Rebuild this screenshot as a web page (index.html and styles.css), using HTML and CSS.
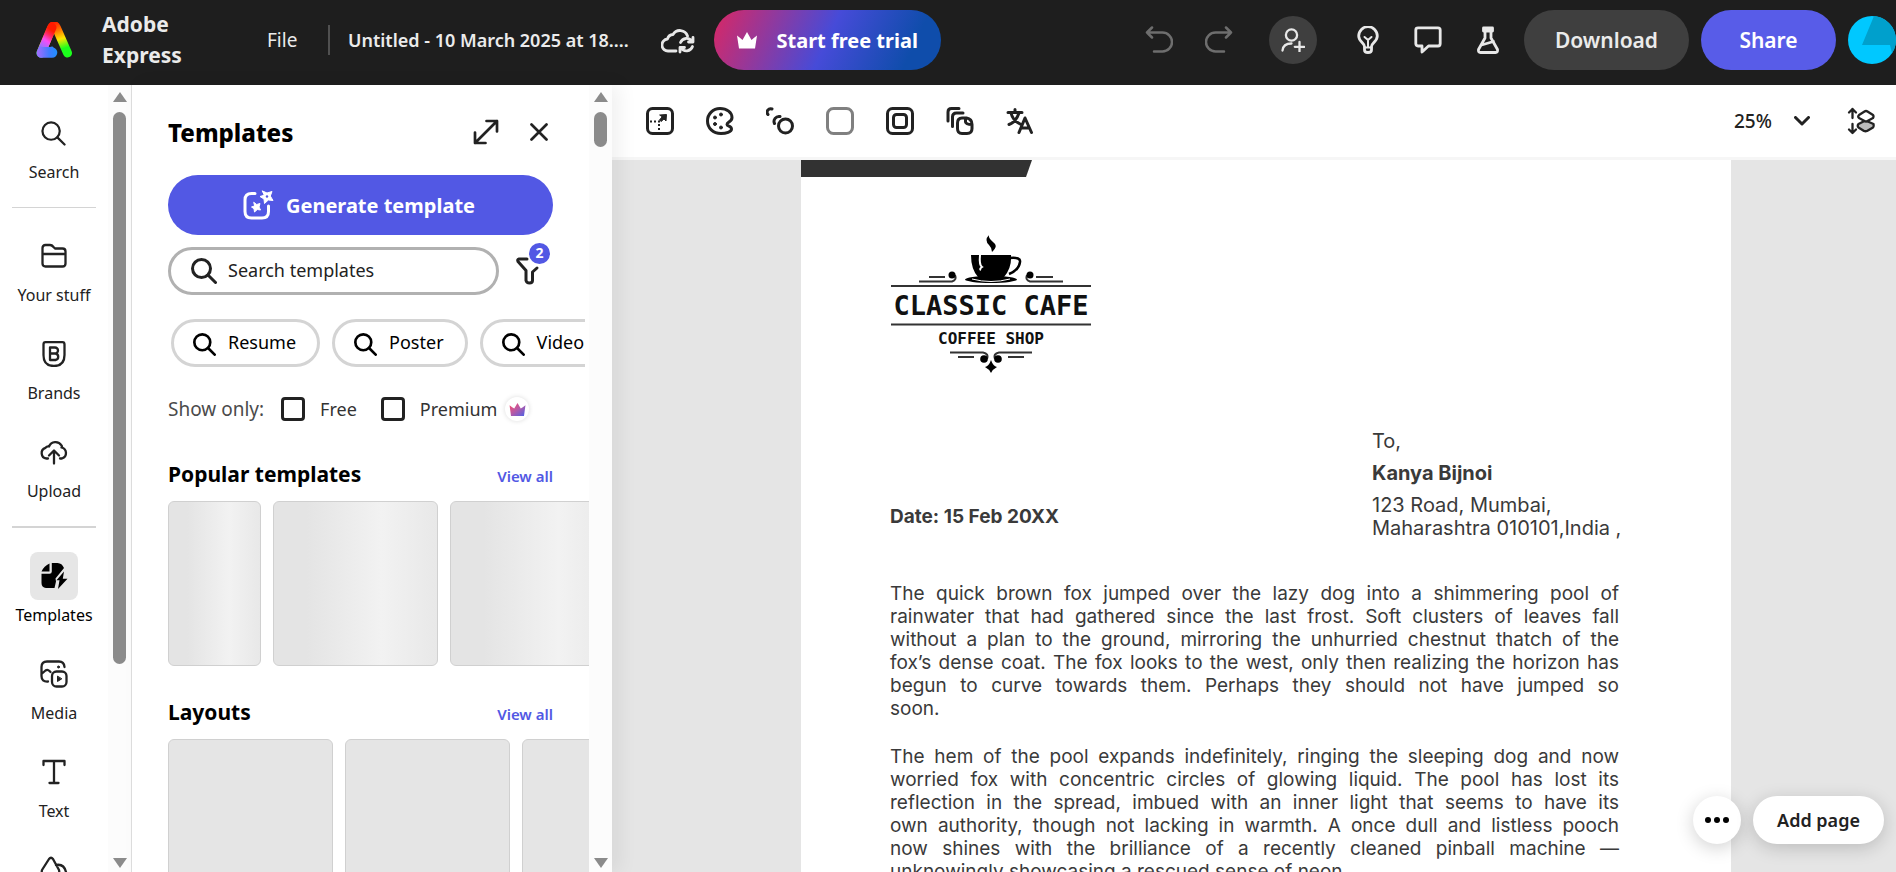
FILE: index.html
```html
<!DOCTYPE html>
<html lang="en">
<head>
<meta charset="utf-8">
<meta name="viewport" content="width=device-width, initial-scale=1">
<title>Adobe Express</title>
<link rel="stylesheet" href="styles.css">
</head>
<body>
<svg class="defs" aria-hidden="true">
  <defs>
    <symbol id="magnifier" viewBox="0 0 26 26"><circle cx="10.500" cy="10.500" r="9"/><path d="M17 17l7.500 7.500"/></symbol>
    <symbol id="crown" viewBox="0 0 22 18"><path d="M1 4.500q4 3 5.500 4.500L11 1l4.500 8q1.500-1.500 5.500-4.500L19 17.500H3z"/></symbol>
  </defs>
</svg>
<header class="topbar">
  <a class="brand" href="#">
    <svg class="brand-logo" viewBox="0 0 36 36" aria-hidden="true">
      <defs>
        <linearGradient id="lg-left" x1="0.600" y1="0" x2="0.300" y2="1"><stop offset="0" stop-color="#ff1a00"/><stop offset=".25" stop-color="#ff2a6a"/><stop offset=".5" stop-color="#f84cf5"/><stop offset=".8" stop-color="#a76bff"/><stop offset="1" stop-color="#5a78ff"/></linearGradient>
        <linearGradient id="lg-right" x1="0" y1="0" x2="0.300" y2="1"><stop offset="0" stop-color="#ff1500"/><stop offset=".35" stop-color="#ff7a00"/><stop offset=".65" stop-color="#ffe600"/><stop offset="1" stop-color="#1cff1c"/></linearGradient>
        <linearGradient id="lg-foot"><stop offset="0" stop-color="#a76bff"/><stop offset=".6" stop-color="#3f7cff"/><stop offset="1" stop-color="#1f8fff"/></linearGradient>
      </defs>
      <path d="M5 31L15.500 6Q18 1 20.500 6L31.500 31" fill="none" stroke="url(#lg-right)" stroke-width="9" stroke-linecap="round" stroke-linejoin="round"/>
      <path d="M5 31L16 5.500" fill="none" stroke="url(#lg-left)" stroke-width="9" stroke-linecap="round"/>
      <path d="M18 15L27 36H16L12 27z" fill="#1e1e1e"/>
      <path d="M1 30Q2 26 4 25H14Q17 24 17.500 25.500Q21.500 27 21.300 31Q20.500 35.500 16 35.800H5Q0.500 35 1 30z" fill="url(#lg-foot)"/>
    </svg>
    <span class="brand-name">Adobe<br>Express</span>
  </a>
  <button class="file-menu" type="button">File</button>
  <span class="topbar-rule"></span>
  <button class="doc-title" type="button">Untitled - 10 March 2025 at 18....</button>
  <button class="icon-btn cloud" type="button" aria-label="Saved to cloud">
    <svg width="34" height="28" viewBox="0 0 34 28" class="ico light"><path d="M15 25H7.500A6 6 0 0 1 6.500 13A6 6 0 0 1 12 8.500A8 8 0 0 1 26.500 10"/><path d="M19.500 16.500A6.500 6.500 0 0 1 31 15.500M32 11.500V16H27.500M31.500 20.500A6.500 6.500 0 0 1 20 22M19 26V21.500H23.500"/></svg>
  </button>
  <button class="trial" type="button"><svg width="22" height="18"><use href="#crown" fill="#fff"/></svg>Start free trial</button>
  <div class="history">
    <button class="icon-btn" type="button" aria-label="Undo"><svg width="28" height="28" viewBox="0 0 28 28" class="ico dim"><path d="M7 1.500L2 6.500L7 11.500M2 6.500H17.500A9.300 9.300 0 0 1 17.500 25.500H9"/></svg></button>
    <button class="icon-btn" type="button" aria-label="Redo"><svg width="28" height="28" viewBox="0 0 28 28" class="ico dim"><path d="M21 1.500L26 6.500L21 11.500M26 6.500H10.500A9.300 9.300 0 0 0 10.500 25.500H19"/></svg></button>
  </div>
  <button class="invite" type="button" aria-label="Invite people"><svg width="24" height="24" viewBox="0 0 24 24" class="ico light thin"><circle cx="10.500" cy="7" r="5.600"/><path d="M1.500 22.500C2 17.500 5.500 15.500 10.500 15.500M18.500 14V23.500M13.800 18.800H23.200"/></svg></button>
  <div class="helpers">
    <button class="icon-btn" type="button" aria-label="Tips"><svg width="28" height="28" viewBox="0 0 28 28" class="ico light"><path d="M10.500 20.500C10.500 17 4.700 15.500 4.700 10A9.300 9.300 0 0 1 23.300 10C23.300 15.500 17.500 17 17.500 20.500V24Q17.500 26.500 14 26.500Q10.500 26.500 10.500 24z"/><path stroke-width="2" d="M10.500 21.500H17.500M10.500 11L14 14L17.500 11M14 14V21"/></svg></button>
    <button class="icon-btn" type="button" aria-label="Comments"><svg width="28" height="28" viewBox="0 0 28 28" class="ico light"><path d="M4 1.800H24Q26.200 1.800 26.200 4V17.500Q26.200 20 24 20H14.500L8 26V20H4Q1.800 20 1.800 17.500V4Q1.800 1.800 4 1.800z"/></svg></button>
    <button class="icon-btn" type="button" aria-label="Labs"><svg width="28" height="28" viewBox="0 0 28 28" class="ico light"><path d="M9.500 2H18.500V5H9.500zM11 5V12L4.500 23.500Q4 26.500 6.500 26.500H21.500Q24 26.500 23.500 23.500L17 12V5M7.500 19L19.500 15.500"/></svg></button>
  </div>
  <button class="download" type="button">Download</button>
  <button class="share" type="button">Share</button>
  <button class="avatar" type="button" aria-label="Account"><svg width="48" height="48" viewBox="0 0 48 48"><circle cx="24" cy="24" r="24" fill="#00c8ff"/><path d="M26 0A24 24 0 0 1 44 37L42 29H14z" fill="#00a0cc"/></svg></button>
</header>

<div class="workspace">
  <nav class="rail">
    <div class="rail-items">
      <button class="rail-item" type="button"><span class="tile"><svg width="25" height="25" class="ico"><use href="#magnifier"/></svg></span>Search</button>
      <hr class="thin-rule">
      <button class="rail-item" type="button"><span class="tile"><svg width="26" height="26" viewBox="0 0 26 26" class="ico"><path d="M1.500 5Q1.500 2 4.500 2H9Q11 2 12.500 4L14 5.500H21.500Q24.500 5.500 24.500 8.500V20.500Q24.500 23.500 21.500 23.500H4.500Q1.500 23.500 1.500 20.500zM1.500 11H24.500"/></svg></span>Your stuff</button>
      <button class="rail-item" type="button"><span class="tile"><svg width="26" height="26" viewBox="0 0 26 26" class="ico"><path d="M4.500 1.200H21.500Q23.500 1.200 23.500 3.500V14Q23.500 25 13 25Q2.500 25 2.500 14V3.500Q2.500 1.200 4.500 1.200zM9 6.500H14A3 3 0 0 1 14 12.500H9zM9 12.500H14.500A3.300 3.300 0 0 1 14.500 19H9z"/></svg></span>Brands</button>
      <button class="rail-item" type="button"><span class="tile"><svg width="28" height="26" viewBox="0 0 28 26" class="ico"><path d="M8 19.500H6.500A5.500 5.500 0 0 1 5.500 8.800Q7 7 9 7.500A7 7 0 0 1 21.500 6.500Q22.500 8 21.500 8.500A5.700 5.700 0 0 1 22 19.500H20M14 24.500V12M9 16.500L14 11.500L19 16.500"/></svg></span>Upload</button>
      <hr class="thick-rule">
      <button class="rail-item active" type="button"><span class="tile"><svg width="28" height="28" viewBox="0 0 28 28"><path d="M9.500 1.500V9.500H1.500Q4 4 9.500 1.500zM11.800 1H17.500Q22 1.200 24 6L15.500 16.500L16 19.500L14.500 26H6Q1.500 25.500 1.500 21V11.800H9.500Q11.800 11.800 11.800 9.500z"/><path d="M24 9.500L16.500 18.300H19.500L18 27L27.500 16.800H22.800z"/></svg></span>Templates</button>
      <button class="rail-item" type="button"><span class="tile"><svg width="28" height="28" viewBox="0 0 28 28" class="ico"><path d="M8 21.500Q1.500 22 1.500 16V7Q1.500 1.500 7 1.500H19Q24 1.500 24.500 7M1.500 14L5.500 10.500Q7.500 9 9.500 11L10.500 12"/><rect x="12" y="11.500" width="14.500" height="15" rx="4.500"/><circle class="solid" cx="18.500" cy="7" r="1"/><path class="solid" d="M17.500 16.500V21.500L21.500 19z"/></svg></span>Media</button>
      <button class="rail-item" type="button"><span class="tile"><svg width="26" height="26" viewBox="0 0 26 26" class="ico"><path d="M2.500 6V2H23.500V6M13 2V24M8.500 24H17.500"/></svg></span>Text</button>
      <button class="rail-item" type="button" aria-label="Elements"><span class="tile"><svg width="28" height="28" viewBox="0 0 28 28" class="ico"><path d="M9 3Q11 .5 13 3L19 14Q20 17.500 17 17.500H4Q1 17.500 2 14zM16 9Q24 7.500 26 16Q26 25.500 17 26Q11 26 9 20.500"/></svg></span></button>
    </div>
    <div class="scrollbar" aria-hidden="true"><span class="arrow up"></span><span class="track"><span class="thumb long"></span></span><span class="arrow down"></span></div>
  </nav>

  <aside class="panel">
    <div class="panel-body">
      <div class="panel-head">
        <h1>Templates</h1>
        <button class="icon-btn" type="button" aria-label="Expand panel"><svg width="26" height="26" viewBox="0 0 26 26" class="ico medium"><path d="M2 24L24 2M13.500 2H24V12.500M2 13.500V24H12.500"/></svg></button>
        <button class="icon-btn" type="button" aria-label="Close panel"><svg width="18" height="18" viewBox="0 0 18 18" class="ico medium"><path d="M1.500 1.500L16.500 16.500M16.500 1.500L1.500 16.500"/></svg></button>
      </div>
      <button class="generate" type="button"><svg width="32" height="32" viewBox="0 0 32 32" class="ico white"><path d="M13 4.500H9.500Q3 4.500 3 11V22.500Q3 29 9.500 29H20Q26.500 29 26.500 22.500V17"/><path class="solid" d="M20.500 2L25 4L30 2.500L28.300 7L31 11.500L26.300 11L22.500 14.500L22 10L18 7.500L22 6.300zM12 13.500L14.700 15.500L18 14.500L17 18L18.500 21L15.300 20.500L12.500 23L12 19.700L9.500 18L12.300 17z"/><circle cx="25" cy="7.500" r="1.200" fill="#5258e4" stroke="none"/></svg>Generate template</button>
      <div class="search-row">
        <label class="search-field"><svg width="26" height="26" class="ico bold"><use href="#magnifier"/></svg><input type="search" placeholder="Search templates" aria-label="Search templates"></label>
        <button class="filter" type="button" aria-label="Filters, 2 applied"><svg width="26" height="28" viewBox="0 0 26 28" class="ico bold"><path d="M12 2H4Q2 2.500 3 4.500L11 13.500V23.500Q11.500 26 14.500 26Q17.500 26 17.500 23.500V15L22 11"/></svg><span class="badge">2</span></button>
      </div>
      <div class="chips">
        <button class="chip" type="button"><svg width="23" height="23" viewBox="0 0 26 26" class="ico bold black"><use href="#magnifier" width="26" height="26"/></svg>Resume</button>
        <button class="chip" type="button"><svg width="23" height="23" viewBox="0 0 26 26" class="ico bold black"><use href="#magnifier" width="26" height="26"/></svg>Poster</button>
        <button class="chip" type="button"><svg width="23" height="23" viewBox="0 0 26 26" class="ico bold black"><use href="#magnifier" width="26" height="26"/></svg>Video</button>
      </div>
      <div class="show-only">
        <span class="show-label">Show only:</span>
        <label class="check"><input type="checkbox">Free</label>
        <label class="check"><input type="checkbox">Premium</label>
        <span class="premium"><svg width="17" height="13" viewBox="0 0 22 18"><defs><linearGradient id="crown-fill" x1="0" y1="0" x2="1" y2="1"><stop offset="0" stop-color="#ff4d6a"/><stop offset=".5" stop-color="#b45aa8"/><stop offset="1" stop-color="#4a62e8"/></linearGradient></defs><path fill="url(#crown-fill)" d="M0 3q4 3 6.500 4.500L11 0l4.500 7.500q2.500-1.500 6.500-4.500L20 18H2z"/></svg></span>
      </div>
      <section class="shelf">
        <div class="shelf-head"><h2>Popular templates</h2><a href="#">View all</a></div>
        <div class="cards shimmer"><span class="card narrow"></span><span class="card"></span><span class="card"></span></div>
      </section>
      <section class="shelf">
        <div class="shelf-head"><h2>Layouts</h2><a href="#">View all</a></div>
        <div class="cards"><span class="card"></span><span class="card"></span><span class="card"></span></div>
      </section>
    </div>
    <div class="scrollbar" aria-hidden="true"><span class="arrow up"></span><span class="track"><span class="thumb short"></span></span><span class="arrow down"></span></div>
  </aside>

  <main class="editor">
    <div class="toolbar">
      <button class="icon-btn" type="button" aria-label="Resize"><svg width="28" height="28" viewBox="0 0 28 28" class="ico bold"><rect x="1.500" y="1.500" width="25" height="25" rx="5"/><path class="solid" d="M14 8L20.500 7.500L20 14L18 12L15 14.500L13.500 13L16 10z"/><path stroke-width="2" stroke-linecap="butt" d="M4 14.500H14M13 17V26" stroke-dasharray="2 2"/></svg></button>
      <button class="icon-btn" type="button" aria-label="Theme"><svg width="28" height="28" viewBox="0 0 28 28" class="ico bold"><path d="M14 1.500C21 1.500 26 5.500 26 10.500C26 15 21 15 21 17.500C21 19.500 25.500 19 25.500 22C25.500 25 20 26.500 15 26.500C7 26.500 1.500 21 1.500 14C1.500 7 7 1.500 14 1.500z"/><g class="solid"><circle cx="15" cy="7.500" r="1.500"/><circle cx="9" cy="10.500" r="1.500"/><circle cx="9" cy="17" r="1.500"/><circle cx="15" cy="20.500" r="1.500"/></g></svg></button>
      <button class="icon-btn" type="button" aria-label="Animate"><svg width="28" height="28" viewBox="0 0 28 28" class="ico bold"><circle cx="19.500" cy="19" r="7"/><path d="M8.500 16.500A5 5 0 0 1 14 9.500M2 7.500A3.500 3.500 0 0 1 6 2"/></svg></button>
      <button class="icon-btn" type="button" aria-label="Background colour"><svg width="28" height="28" viewBox="0 0 28 28" class="ico bold grey"><rect x="1.500" y="1.500" width="25" height="25" rx="6"/></svg></button>
      <button class="icon-btn" type="button" aria-label="Frame"><svg width="28" height="28" viewBox="0 0 28 28" class="ico bold"><rect x="1.500" y="1.500" width="25" height="25" rx="5"/><rect x="7.500" y="7.500" width="13" height="13" rx="3"/></svg></button>
      <button class="icon-btn" type="button" aria-label="Pages"><svg width="28" height="28" viewBox="0 0 28 28" class="ico bold"><path d="M2 14V5Q2 1.500 5.500 1.500H13M6.500 19.500V10Q6.500 6 10.500 6H17"/><path d="M16 11H20.500Q26 12 26 17.500V21.500Q26 26.500 21 26.500H16Q11.500 26.500 11.500 21.500V16Q11.500 11 16 11zM19.500 11V15Q20 17.500 26 17.500"/></svg></button>
      <button class="icon-btn" type="button" aria-label="Translate"><svg width="28" height="28" viewBox="0 0 28 28" class="ico bold"><path d="M2 5.500H16M9 2.500V5.500M5 6Q7 14 15 17.500M13 6Q10 15 3 17.500M13 25.500L19 11L25.500 25.500M15.500 21H23"/></svg></button>
      <label class="zoom"><select aria-label="Zoom level"><option>25%</option></select><svg width="16" height="10" viewBox="0 0 16 10" class="ico bold"><path d="M1.500 1.500L8 8L14.500 1.500"/></svg></label>
      <button class="icon-btn" type="button" aria-label="Layers"><svg width="28" height="28" viewBox="0 0 28 28" class="ico"><path d="M5.500 11V2M2 5.500L5.500 2L9 5.500M5.500 17V26M2 22.500L5.500 26L9 22.500"/><path fill="#bbb" d="M11.500 17L18.500 13.500L26.500 17Q27 19.500 26 20.500L20 24Q18.500 24.500 17 24L11.500 20.500Q10 19 11.500 17z"/><path fill="#fff" d="M17.500 4.500Q19 3.500 20.500 4.500L26 8Q27 9.500 26 11L20.500 14Q19 15 17.500 14L12 11Q10.500 9.500 12 8z"/></svg></button>
    </div>
    <div class="canvas">
      <article class="letter">
        <svg class="letter-band" width="231" height="17" viewBox="0 0 231 17" aria-hidden="true"><path d="M0 0H231L225 17H0z" fill="#323232"/></svg>
        <svg class="cafe-logo" width="202" height="140" viewBox="0 0 202 140" role="img" aria-label="Classic Cafe Coffee Shop">
          <g fill="none" stroke="#333" stroke-width="2">
            <path d="M1 53H201M1 91.500H201"/><path d="M39 44H55M29 48.500H62Q67 47 65 42M146 44H163M173 48.500H140Q135 47 137 42"/>
            <path d="M60 119.500H93Q99 120.500 97 126M142 119.500H109Q103 120.500 105 126M68 124H84M118 124H134"/>
          </g>
          <circle cx="62" cy="42" r="3.500"/><circle cx="140" cy="42" r="3.500"/><circle cx="94" cy="126" r="3.800"/><circle cx="108" cy="126" r="3.800"/>
          <path d="M101 127Q103 133 107 134Q103 136 101 140Q99 136 95 134Q99 133 101 127z"/>
          <path d="M99 2Q94 7 99 12Q102 15 102 19Q109 13 103 9Q98 5 99 2zM81 22H121Q122 35 114 44Q110 47 101 47Q92 47 88 44Q81 36 81 22z"/>
          <path d="M120 25Q131 24 130 29Q129 37 119 41" fill="none" stroke="#000" stroke-width="2.500"/>
          <ellipse cx="101" cy="46.500" rx="26" ry="3.500"/><path d="M82 46Q101 51 120 46" fill="none" stroke="#fff"/>
          <path d="M90 22Q89 32 92 34Q89 36 91 37" fill="none" stroke="#fff" stroke-width="2"/>
          <text x="101" y="82" class="cafe-name">CLASSIC CAFE</text><text x="101" y="111" class="cafe-sub">COFFEE SHOP</text>
        </svg>
        <div class="letter-meta">
          <p class="date">Date: 15 Feb 20XX</p>
          <address><span>To,</span><strong>Kanya Bijnoi</strong><span>123 Road, Mumbai,<br>Maharashtra 010101,India ,</span></address>
        </div>
        <p class="para"><span>The quick brown fox jumped over the lazy dog into a shimmering pool of</span> <span>rainwater that had gathered since the last frost. Soft clusters of leaves fall</span> <span>without a plan to the ground, mirroring the unhurried chestnut thatch of the</span> <span>fox’s dense coat. The fox looks to the west, only then realizing the horizon has</span> <span>begun to curve towards them. Perhaps they should not have jumped so</span> <span class="last">soon.</span></p>
        <p class="para"><span>The hem of the pool expands indefinitely, ringing the sleeping dog and now</span> <span>worried fox with concentric circles of glowing liquid. The pool has lost its</span> <span>reflection in the spread, imbued with an inner light that seems to have its</span> <span>own authority, though not lacking in warmth. A once dull and listless pooch</span> <span>now shines with the brilliance of a recently cleaned pinball machine —</span> <span class="last">unknowingly showcasing a rescued sense of neon.</span></p>
      </article>
      <div class="page-actions">
        <button class="more" type="button" aria-label="More options"><svg width="26" height="6" viewBox="0 0 26 6"><circle cx="4" cy="3" r="3"/><circle cx="13" cy="3" r="3"/><circle cx="22" cy="3" r="3"/></svg></button>
        <button class="add-page" type="button">Add page</button>
      </div>
    </div>
  </main>
</div>
</body>
</html>
```
FILE: styles.css
```css
* { box-sizing: border-box; }
body {
  margin: 0;
  height: 100vh;
  display: flex;
  flex-direction: column;
  overflow: hidden;
  font-family: "Noto Sans", "Open Sans", sans-serif;
  font-size: 18px;
  color: #222;
  background: #fff;
}
button, input, select { font: inherit; color: inherit; border: 0; background: none; padding: 0; margin: 0; }
h1, h2, p { margin: 0; }
a { text-decoration: none; }
svg { display: block; flex: none; }
.defs { position: absolute; width: 0; height: 0; }

.ico { fill: none; stroke: #222; stroke-width: 2.3; stroke-linecap: round; stroke-linejoin: round; }
.ico.medium { stroke-width: 2.7; }
.ico.bold { stroke-width: 3; }
.ico.black { stroke: #000; }
.ico.light { stroke: #e8e8e8; stroke-width: 2.8; }
.ico.light.thin { stroke-width: 2.3; }
.ico.dim { stroke: #6e6e6e; stroke-width: 2.5; }
.ico.white { stroke: #fff; stroke-width: 3; }
.ico.grey { stroke: #808080; }
.ico .solid { fill: #222; stroke-width: 1; }
.ico.white .solid { fill: #fff; }
.icon-btn { display: flex; align-items: center; justify-content: center; }

/* Top bar */
.topbar {
  height: 85px;
  flex: none;
  display: flex;
  align-items: center;
  padding: 0 0 5px 36px;
  background: #1e1e1e;
  color: #ebebeb;
  white-space: nowrap;
}
.brand { display: flex; align-items: center; gap: 30px; color: inherit; }
.brand-logo { width: 36px; height: 36px; }
.brand-name { width: 135px; font-size: 21px; line-height: 31px; font-weight: 700; }
.file-menu { width: 61px; margin-left: 30px; font-size: 19px; text-align: left; }
.topbar-rule { width: 2px; height: 30px; background: #505050; }
.doc-title { min-width: 280px; margin-left: 18px; font-weight: 600; text-align: left; }
.cloud { margin-left: 32px; }
.trial {
  display: flex;
  align-items: center;
  justify-content: center;
  gap: 18px;
  width: 227px;
  height: 60px;
  margin-left: 19px;
  border-radius: 30px;
  font-size: 20px;
  font-weight: 700;
  color: #fff;
  background: linear-gradient(115deg, #ce2a6d 4%, #464bd8 50%, #0f4dab 85%);
}
.history { display: flex; gap: 32px; margin-left: auto; }
.invite { display: flex; align-items: center; justify-content: center; width: 48px; height: 48px; margin-left: 36px; border-radius: 50%; background: #3f3f3f; }
.helpers { display: flex; gap: 32px; margin: 0 22px 0 37px; }
.download, .share { height: 60px; border-radius: 30px; font-size: 21px; font-weight: 600; }
.download { width: 165px; background: #3f3f3f; }
.share { width: 135px; margin: 0 12px; background: #585ce8; color: #fff; }

.workspace { flex: 1; min-height: 0; display: flex; }

/* Scrollbars */
.scrollbar { width: 23px; flex: none; display: flex; flex-direction: column; align-items: center; gap: 10px; padding: 7px 0 4px; background: #fcfcfc; }
.arrow { border: 7px solid transparent; border-top-width: 0; border-bottom-width: 0; }
.arrow.up { border-bottom: 10px solid #8b8b8b; }
.arrow.down { border-top: 10px solid #8b8b8b; }
.track { flex: 1; width: 13px; }
.thumb { display: block; border-radius: 7px; background: #8b8b8b; }
.thumb.long { height: 75%; }
.thumb.short { height: 35px; }

/* Left rail */
.rail { width: 132px; flex: none; display: flex; border-right: 1px solid #dedede; }
.rail-items { flex: 1; min-width: 0; display: flex; flex-direction: column; align-items: center; gap: 24px; padding-top: 24px; overflow: hidden; }
.rail-item { flex: none; display: flex; flex-direction: column; align-items: center; gap: 4px; font-size: 16px; line-height: 22px; white-space: nowrap; }
.tile { display: flex; align-items: center; justify-content: center; width: 48px; height: 48px; border-radius: 8px; }
.active { color: #000; }
.active .tile { background: #e6e6e6; }
.rail hr { flex: none; width: 84px; margin: 0; border: 0; background: #d4d4d4; }
.rail .thin-rule { height: 1px; }
.rail .thick-rule { height: 2px; }

/* Templates panel */
.panel { position: relative; z-index: 1; width: 480px; flex: none; display: flex; background: #fff; box-shadow: 8px 0 18px rgba(0, 0, 0, .06); }
.panel-body { flex: 1; min-width: 0; overflow: hidden; padding: 29px 36px 0; color: #000; }
.panel-head { display: flex; align-items: center; gap: 31px; height: 36px; padding-right: 5px; }
.panel-head h1 { flex: 1; font-size: 24px; font-weight: 800; }
.generate { display: flex; align-items: center; justify-content: center; gap: 12px; width: 100%; height: 60px; margin-top: 25px; padding-right: 4px; border-radius: 30px; background: #5258e4; color: #fff; font-size: 20px; font-weight: 700; }
.search-row { display: flex; gap: 16px; margin-top: 12px; }
.search-field { flex: 1; min-width: 0; display: flex; align-items: center; gap: 11px; height: 48px; padding: 0 20px; border: 3px solid #b1b1b1; border-radius: 24px; }
.search-field input { flex: 1; min-width: 0; width: 0; padding-bottom: 3px; outline: 0; }
.search-field input::placeholder { color: #222; opacity: 1; }
.filter { position: relative; flex: none; display: flex; align-items: center; width: 38px; }
.badge { position: absolute; top: -4px; right: 3px; width: 21px; height: 21px; border-radius: 50%; background: #5258e4; color: #fff; font-size: 14px; line-height: 20px; font-weight: 700; text-align: center; }
.chips { display: flex; gap: 12px; margin: 24px -32px 0 3px; overflow: hidden; }
.chip { flex: none; display: flex; align-items: center; gap: 12px; height: 48px; padding: 0 21px 2px 19px; border: 3px solid #d4d4d4; border-radius: 24px; }
.chip svg { margin-top: 5px; }
.show-only { display: flex; align-items: center; height: 26px; margin-top: 29px; white-space: nowrap; color: #333; }
.show-label { margin-right: 17px; font-size: 19px; color: #4b4b4b; }
.check { display: flex; align-items: center; gap: 15px; margin-right: 24px; }
.check input { appearance: none; width: 24px; height: 24px; border: 3px solid #222; border-radius: 4px; background: #fff; }
.check + .check { margin-right: 8px; }
.premium { display: flex; align-items: center; justify-content: center; width: 24px; height: 24px; border-radius: 50%; box-shadow: 0 0 5px rgba(0, 0, 0, .14); }
.shelf { margin: 36px -36px 0 0; }
.shelf-head { display: flex; align-items: center; justify-content: space-between; height: 32px; padding-right: 36px; }
.shelf-head h2 { font-size: 21px; font-weight: 700; }
.shelf-head a { padding-top: 4px; font-size: 15px; font-weight: 600; color: #5258e4; }
.cards { display: flex; gap: 12px; margin-top: 11px; overflow: hidden; }
.card { flex: none; width: 165px; height: 165px; border: 1px solid #d0d0d0; border-radius: 6px; background: #e5e5e5; }
.narrow { width: 93px; }
.shimmer .card { background: linear-gradient(90deg, #e4e4e4 20%, #f2f2f2 66%, #e8e8e8); }
.shelf + .shelf { margin-top: 30px; }

/* Editor */
.editor { flex: 1; min-width: 0; display: flex; flex-direction: column; }
.toolbar { flex: none; display: flex; align-items: center; gap: 32px; height: 75px; padding: 0 21px 0 34px; border-bottom: 3px solid #f6f6f6; }
.zoom { display: flex; align-items: center; gap: 22px; margin-left: auto; margin-right: 5px; }
.zoom select { appearance: none; font-size: 19px; font-weight: 500; }
.canvas { position: relative; flex: 1; min-height: 0; display: flex; justify-content: center; padding-left: 24px; overflow: hidden; background: #e5e5e5; }
.letter { width: 930px; flex: none; align-self: flex-start; min-height: 100%; padding: 0 112px 0 89px; background: #fff; color: #3a3a3a; font-family: "Inter", "Lato", sans-serif; font-size: 19px; line-height: 23px; }
.letter-band { margin-left: -89px; }
.cafe-logo { margin-top: 56px; }
.cafe-name, .cafe-sub { fill: #111; text-anchor: middle; font-family: "DejaVu Sans Mono", monospace; font-weight: 700; }
.cafe-name { font-size: 27px; }
.cafe-sub { font-size: 16px; }
.letter-meta { display: flex; justify-content: space-between; align-items: flex-end; margin-top: 57px; padding-bottom: 42px; white-space: nowrap; }
.date { padding-bottom: 12px; font-weight: 700; }
address { display: flex; flex-direction: column; gap: 9px; width: 247px; font-size: 20px; font-style: normal; }
.para { white-space: nowrap; }
.para + .para { margin-top: 25px; }
.para span { display: block; text-align-last: justify; }
.para .last { text-align-last: left; }

.page-actions { position: absolute; right: 12px; bottom: 28px; display: flex; gap: 12px; }
.more, .add-page { height: 48px; border-radius: 24px; background: #fff; box-shadow: 0 4px 18px rgba(0, 0, 0, .18); }
.more { width: 48px; display: flex; align-items: center; justify-content: center; }
.add-page { width: 131px; font-weight: 600; }
```
